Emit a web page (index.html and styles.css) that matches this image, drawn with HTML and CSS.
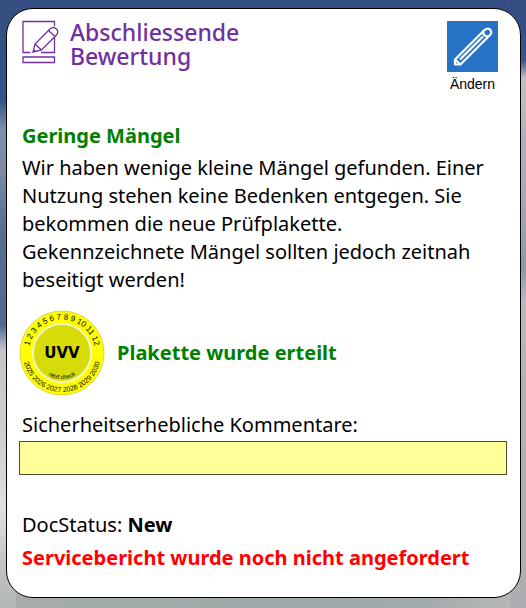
FILE: index.html
```html
<!DOCTYPE html>
<html lang="de">
<head>
<meta charset="utf-8">
<meta name="viewport" content="width=device-width, initial-scale=1">
<title>Abschliessende Bewertung</title>
<link rel="stylesheet" href="styles.css">
</head>
<body>
<main class="card">
  <header class="header">
    <svg class="header-icon" viewBox="0 0 37 44" aria-hidden="true">
      <path d="M32.500 6V1.500H1V32.500H8.500M19 32.500H32.500V17.500M1 37H32.500V42.500H1Z"/>
      <path d="M11 32L13 24L28 9Q31.500 6 34.500 9Q37 12 34.500 15L19.500 30ZM13 24L19.500 30M26.500 10.500L33 16.500M11 29.500L13.500 31.500"/>
    </svg>
    <h1 class="title">Abschliessende Bewertung</h1>
    <button class="edit" type="button">
      <svg class="edit-icon" viewBox="0 0 51 51" aria-hidden="true">
        <rect width="51" height="51"/>
        <path d="M8 38.500L37.500 9Q40.500 6.500 43 8.500Q45.500 11.500 43 14L13.500 43.500H8ZM13 38.500L36 15.500M36.500 9.500C35.500 14 38 16 42 15M8 38.500L13.500 43.500"/>
      </svg>
      <span>Ändern</span>
    </button>
  </header>

  <section class="result">
    <h2 class="heading">Geringe Mängel</h2>
    <p>Wir haben wenige kleine Mängel gefunden. Einer Nutzung stehen keine Bedenken entgegen. Sie bekommen die neue Prüfplakette. Gekennzeichnete Mängel sollten jedoch zeitnah beseitigt werden!</p>
  </section>

  <section class="sticker-row">
    <svg class="sticker" viewBox="0 0 86 86" role="img" aria-label="UVV Prüfplakette">
      <defs>
        <path id="months" d="M9.500 43A33.500 33.500 0 0 1 76.500 43"/>
        <path id="years" d="M4 43A39 39 0 0 0 82 43"/>
        <path id="check" d="M17 43A26 26 0 0 0 69 43"/>
      </defs>
      <circle class="ring" cx="43" cy="43" r="42"/>
      <circle class="disc" cx="43" cy="43" r="29"/>
      <text class="months"><textPath href="#months" startOffset="50%">1 2 3 4 5 6 7 8 9 10 11 12</textPath></text>
      <text class="years"><textPath href="#years" startOffset="50%">2025 2026 2027 2028 2029 2030</textPath></text>
      <text class="check"><textPath href="#check" startOffset="50%">next check</textPath></text>
      <text class="uvv" x="43" y="48">UVV</text>
    </svg>
    <p class="heading">Plakette wurde erteilt</p>
  </section>

  <section class="comments">
    <label for="comments">Sicherheitserhebliche Kommentare:</label>
    <input class="comment-box" id="comments" type="text">
  </section>

  <footer class="status">
    <p>DocStatus: <strong>New</strong></p>
    <p class="heading alert">Servicebericht wurde noch nicht angefordert</p>
  </footer>
</main>
</body>
</html>
```
FILE: styles.css
```css
* {
  box-sizing: border-box;
}

body {
  margin: 0;
  min-height: 100vh;
  padding: 8px 5px 10px 6px;
  font-family: "Noto Sans", "Open Sans", sans-serif;
  font-size: 20px;
  line-height: 28px;
  color: #000;
  background:
    linear-gradient(#344c82 0, #38548c 60px, #c4c0c4 78px, #aeb0b8 140px, #a8abb1 190px, #8d98a4 270px, #b8b8bf 300px, #b0b0b8 420px, #adadb2 608px) right / 16px 100% no-repeat,
    linear-gradient(#33507f 0, #36528a 100px, #7f90ac 130px, #7d8ba3 170px, #586f94 225px, #50698f 325px, #c3c7ca 350px, #d0d1d0 450px, #e0e1de 510px, #c2c5c4 560px, #b3b7b6 608px) left / 16px 100% no-repeat,
    linear-gradient(90deg, #a6adac, #a0a9a9 50%, #a2aaab 80%, #bababa) bottom / 100% 16px no-repeat,
    #354e84;
}

h1, h2, p {
  margin: 0;
}

.card {
  padding: 11px 13px 25px 15px;
  border: 1px solid #000;
  border-radius: 27px;
  background: #fff;
}

.header {
  display: flex;
  align-items: flex-start;
  gap: 11px;
  padding-right: 9px;
}

.header-icon {
  flex: none;
  width: 37px;
  height: 44px;
  fill: none;
  stroke: #7030a0;
  stroke-width: 1.3;
}

.title {
  flex: 0 1 200px;
  font-size: 23px;
  font-weight: 500;
  line-height: 24px;
  color: #7030a0;
}

.edit {
  display: flex;
  flex-direction: column;
  align-items: center;
  margin: 1px 0 0 auto;
  padding: 0;
  border: 0;
  background: none;
  font: 14px/24px "Liberation Sans", sans-serif;
  color: #000;
}

.edit-icon {
  width: 51px;
  height: 51px;
  fill: none;
  stroke: #fff;
  stroke-width: 2.2;
  stroke-linejoin: round;
}

.edit-icon rect {
  fill: #2672c4;
  stroke: none;
}

.result {
  display: grid;
  gap: 4px;
  margin-top: 26px;
}

.heading {
  font-size: 20px;
  font-weight: 700;
  line-height: 28px;
  color: #008000;
}

.sticker-row {
  display: flex;
  align-items: center;
  gap: 12px;
  margin: 16px 0 15px -3px;
}

.sticker {
  flex: none;
  width: 86px;
  height: 86px;
}

.ring {
  fill: #ff0;
  stroke: #d8d83c;
}

.disc {
  fill: #d7dc09;
  stroke: #f3f3c8;
  stroke-width: 2;
}

.sticker text {
  text-anchor: middle;
  font-family: "Liberation Sans", sans-serif;
}

.months {
  font-size: 8px;
}

.years {
  font-size: 7px;
}

.check {
  font-size: 6px;
}

.sticker .uvv {
  font-family: "DejaVu Sans", sans-serif;
  font-size: 15px;
  font-weight: 700;
}

.comments {
  display: grid;
  gap: 2px;
}

.comment-box {
  height: 34px;
  margin-left: -3px;
  padding: 0 4px;
  border: 1px solid #4c4c2c;
  border-radius: 0;
  background: #ffff99;
  font: inherit;
}

.status {
  display: grid;
  gap: 5px;
  margin-top: 36px;
}

.alert {
  color: #f00;
}
```
